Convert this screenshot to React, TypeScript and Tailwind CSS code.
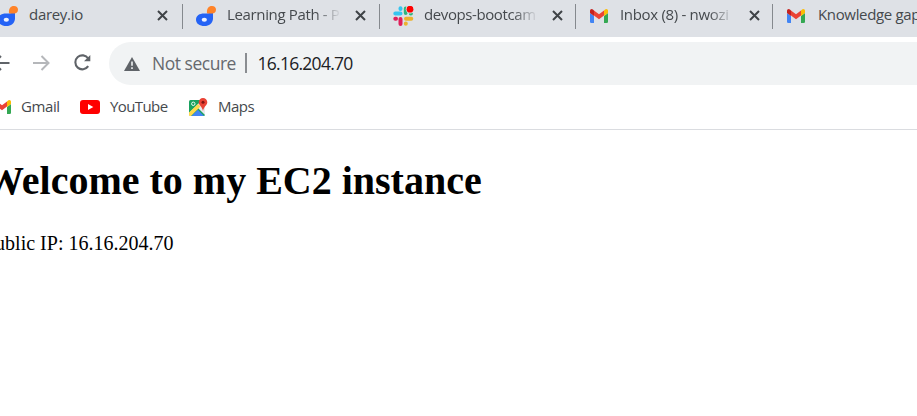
import type { ReactNode } from "react";

const ui = "font-['Open_Sans','Noto_Sans',sans-serif]";

function DareyIcon() {
  return (
    <svg width="20" height="20" viewBox="0 0 20 20">
      <path d="M17 6.500V13C16.500 17.500 13 20 8.500 20C3.500 20 0 17.500 0 13.700C0 9.500 3.500 7.500 8 7.500C12 7.500 13 7 17 6.500Z" fill="#2563f5" />
      <ellipse cx="8.300" cy="13.800" rx="2.600" ry="2" fill="#eef2ff" />
      <path d="M11 7.300C10.400 2.700 12.500 0 16 0C18.500 0 20 1.500 20 3.700C20 7 17 8.200 11 7.300Z" fill="#ff8329" />
    </svg>
  );
}

function SlackIcon() {
  return (
    <svg width="21" height="20" viewBox="0 0 21 20">
      <path d="M7.500 2.300V3M2.300 7.500H7.500" stroke="#36c5f0" strokeWidth="4" strokeLinecap="round" />
      <path d="M12.700 2.500V7M18 7.500H17.700" stroke="#2eb67d" strokeWidth="3.800" strokeLinecap="round" />
      <path d="M7.500 12.900V18M2.300 12.700H3" stroke="#e01e5a" strokeWidth="4" strokeLinecap="round" />
      <path d="M13 12.700H18.300M12.800 17.800V17.500" stroke="#ecb22e" strokeWidth="4" strokeLinecap="round" />
      <circle cx="17" cy="3.200" r="4.200" fill="#dee1e6" />
      <circle cx="17" cy="3.200" r="3.400" fill="#f00" />
    </svg>
  );
}

function GmailIcon() {
  return (
    <svg width="18" height="14" viewBox="0 0 18 14">
      <path d="M0 4L4 7V14H1.300Q0 14 0 12.700Z" fill="#4285f4" />
      <path d="M18 4L14 7V14H16.700Q18 14 18 12.700Z" fill="#34a853" />
      <path d="M4 1.500L9 5.300L14 1.500V6.500L9 10.300L4 6.500Z" fill="#ea4335" />
      <path d="M0 4V2C0 .2 1.800-.5 3.200.7L4 1.400V7Z" fill="#c5221f" />
      <path d="M18 4V2C18 .2 16.200-.5 14.800.7L14 1.400V7Z" fill="#fbbc04" />
    </svg>
  );
}

function MapsIcon() {
  return (
    <svg width="19" height="19" viewBox="0 0 19 19">
      <rect x="0" y="2" width="16" height="16" rx="1.500" fill="#19a15f" />
      <path d="M0 15L12 3L16 7V17L9 10L1.500 18H1Q0 18 0 17Z" fill="#e8eaed" />
      <path d="M0 14.500L9 6L11.500 8.500L2 18H1Q0 18 0 17Z" fill="#ffd94c" />
      <path d="M2.500 18L8.800 11.700L15 18Z" fill="#4285f4" />
      <circle cx="4.300" cy="5.800" r="1.700" fill="none" stroke="#fff" strokeWidth=".9" />
      <path d="M14 0A4.300 4.300 0 0 0 9.700 4.300C9.700 7.500 13.300 8.500 14 13C14.700 8.500 18.300 7.500 18.300 4.300A4.300 4.300 0 0 0 14 0Z" fill="#e94235" />
      <circle cx="14" cy="4.300" r="1.500" fill="#811411" />
    </svg>
  );
}

function YouTubeIcon() {
  return (
    <svg width="20" height="14" viewBox="0 0 20 14">
      <rect width="20" height="14" rx="3" fill="#f00" />
      <path d="M8 4L13.300 7L8 10Z" fill="#fff" />
    </svg>
  );
}

function Tab({ icon, title, width, text, fade }: { icon: ReactNode; title: string; width: string; text: string; fade?: boolean }) {
  return (
    <div className={`flex h-[31px] shrink-0 items-center ${width}`}>
      <div className="flex w-[32px] shrink-0 items-center pl-[1px]">{icon}</div>
      <div className={`mb-[3px] w-[114px] shrink-0 overflow-hidden whitespace-nowrap text-[15px] leading-[22px] text-[#45494d] ${text} ${fade ? "[mask-image:linear-gradient(to_right,black_78%,transparent_100%)]" : ""}`}>
        {title}
      </div>
      <svg className="ml-[14px] shrink-0" width="11" height="11" viewBox="0 0 11 11">
        <path d="M1 1L10 10M10 1L1 10" stroke="#3f4347" strokeWidth="2" />
      </svg>
    </div>
  );
}

function Divider() {
  return <div className="mt-[1px] h-[25px] w-px shrink-0 bg-[#85898e]" />;
}

export default function App() {
  return (
    <div className="h-[416px] w-[917px] overflow-hidden bg-white">
      <div className={`flex h-[37px] overflow-hidden bg-[#dee1e6] ${ui}`}>
        <div className="-ml-[3px] flex h-[31px] items-center">
          <Tab icon={<DareyIcon />} title="darey.io" width="w-[185px]" text="tracking-[-0.3px]" />
          <Divider />
          <div className="w-[12px]" />
          <Tab icon={<DareyIcon />} title="Learning Path - P" width="w-[184px]" text="tracking-[-0.35px]" fade />
          <Divider />
          <div className="w-[12px]" />
          <Tab icon={<SlackIcon />} title="devops-bootcam" width="w-[183px]" text="tracking-[-0.4px]" fade />
          <Divider />
          <div className="w-[13px]" />
          <Tab icon={<GmailIcon />} title="Inbox (8) - nwozi" width="w-[183px]" text="-ml-[1px] mr-[1px] tracking-[-0.32px]" fade />
          <Divider />
          <div className="w-[13px]" />
          <Tab icon={<GmailIcon />} title="Knowledge gap" width="w-[184px]" text="tracking-[-0.35px]" />
        </div>
      </div>

      <div className={`flex h-[48px] items-start pt-[5px] ${ui}`}>
        <div className="flex h-[43px] w-[109px] shrink-0 items-center">
          <svg className="-ml-[8px] -mt-[2px] shrink-0" width="18" height="16" viewBox="0 0 18 16" fill="none" stroke="#5f6368" strokeWidth="2">
            <path d="M17.500 8H2M9 1L2 8L9 15" />
          </svg>
          <svg className="-mt-[2px] ml-[23px] shrink-0" width="17" height="16" viewBox="0 0 17 16" fill="none" stroke="#b5b7ba" strokeWidth="2">
            <path d="M0 8H15M8.500 1L15.500 8L8.500 15" />
          </svg>
          <svg className="-mt-[1px] ml-[23px] shrink-0" width="18" height="18" viewBox="0 0 18 18">
            <path d="M15.200 4.500A7 7 0 1 0 15.200 12.200" fill="none" stroke="#5f6368" strokeWidth="2.100" />
            <path d="M17.300 1V7.200H11Z" fill="#5f6368" />
          </svg>
        </div>
        <div className="flex h-[43px] flex-1 items-center rounded-l-full bg-[#f1f3f4] pl-[15px]">
          <svg width="16" height="14" viewBox="0 0 16 14">
            <path d="M8 0L16 14H0Z" fill="#5f6368" />
            <path d="M8 4.500V8.800M8 10.200V12" stroke="#f1f3f4" strokeWidth="1.600" />
          </svg>
          <div className="-mt-[1px] ml-[12px] w-[93px] whitespace-nowrap text-[17.500px] leading-[24px] tracking-[-0.48px] text-[#66696e]">Not secure</div>
          <div className="-mt-[1px] h-[20px] w-[1.500px] bg-[#8a8d91]" />
          <div className="-mt-[1px] ml-[11px] whitespace-nowrap text-[17.500px] leading-[24px] tracking-[-0.73px] text-[#202124]">16.16.204.70</div>
        </div>
      </div>

      <div className={`flex h-[45px] items-center border-b border-[#dadce0] text-[15px] leading-[22px] text-[#45494d] ${ui}`}>
        <div className="-ml-[7px] w-[28px] shrink-0"><GmailIcon /></div>
        <div className="mb-[2px] w-[59px] whitespace-nowrap tracking-[-0.4px]">Gmail</div>
        <div className="w-[30px]"><YouTubeIcon /></div>
        <div className="mb-[2px] w-[79px] whitespace-nowrap tracking-[-0.6px]">YouTube</div>
        <div className="w-[29px]"><MapsIcon /></div>
        <div className="mb-[2px] whitespace-nowrap tracking-[-0.5px]">Maps</div>
      </div>

      <div className="-ml-[16px] font-['Liberation_Serif',serif] text-black">
        <h1 className="pt-[28px] text-[40px] font-bold leading-[46px]">Welcome to my EC2 instance</h1>
        <p className="pt-[28px] text-[20px] leading-[23px]">Public IP: 16.16.204.70</p>
      </div>
    </div>
  );
}
